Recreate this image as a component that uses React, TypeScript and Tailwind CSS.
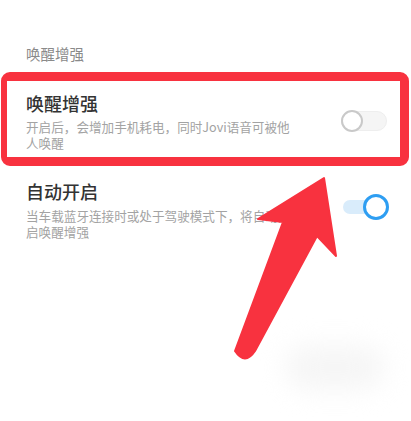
import React from 'react';

const font = { fontFamily: '"Noto Sans CJK SC", "Noto Sans", sans-serif' };

function Toggle({ on }: { on: boolean }) {
  if (on) {
    return (
      <div className="relative w-[46px] h-[26px] flex items-center">
        <div className="absolute left-0 right-[10px] h-[14px] rounded-full bg-[#d9ecfb]" />
        <div className="absolute right-0 w-[26px] h-[26px] rounded-full border-[3px] border-[#2e9ef2] bg-white" />
      </div>
    );
  }
  return (
    <div className="relative w-[46px] h-[22px] flex items-center">
      <div className="absolute inset-x-0 h-[20px] rounded-full bg-[#f5f5f5] border border-[#eeeeee]" />
      <div className="absolute left-0 w-[22px] h-[22px] rounded-full border-2 border-[#c9c9c9] bg-white" />
    </div>
  );
}

export default function App() {
  return (
    <div className="relative w-[411px] h-[421px] bg-white overflow-hidden" style={font}>
      <div className="pt-[44px]">
        <div className="pl-[26px] text-[14.5px] leading-[20px] text-[#8a8a8a]">唤醒增强</div>

        <div className="mt-[8px] ml-[1px] w-[408px] border-[9px] border-l-[6px] border-[#f8323f] rounded-[9px] pl-[19px] pr-[13px] pt-[10px] pb-[6px] flex items-center">
          <div className="flex-1">
            <div className="text-[18px] leading-[24px] font-medium text-[#333]">唤醒增强</div>
            <div className="mt-[4px] text-[12.6px] leading-[16px] text-[#a3a3a3]">
              <div>开启后，会增加手机耗电，同时Jovi语音可被他</div>
              <div>人唤醒</div>
            </div>
          </div>
          <Toggle on={false} />
        </div>

        <div className="mt-[13px] pl-[26px] pr-[22px] flex items-center">
          <div className="flex-1">
            <div className="text-[18px] leading-[24px] font-medium text-[#333]">自动开启</div>
            <div className="mt-[5px] text-[12.6px] leading-[16px] text-[#a3a3a3]">
              <div>当车载蓝牙连接时或处于驾驶模式下，将自动开</div>
              <div>启唤醒增强</div>
            </div>
          </div>
          <div className="-mt-[6px]">
            <Toggle on />
          </div>
        </div>
      </div>

      <div className="absolute left-[285px] top-[345px] w-[100px] h-[45px] rounded-full bg-[#f6f6f6] blur-[12px]" />

      <svg className="absolute inset-0" width="411" height="421" viewBox="0 0 411 421">
        <path
          d="M324 178 L336 256 L317 236 L255 351 Q245 366 235 351 L283 222 L258 219 Z"
          fill="#f8323f"
          stroke="#f8323f"
          strokeWidth={2}
          strokeLinejoin="round"
        />
      </svg>
    </div>
  );
}
